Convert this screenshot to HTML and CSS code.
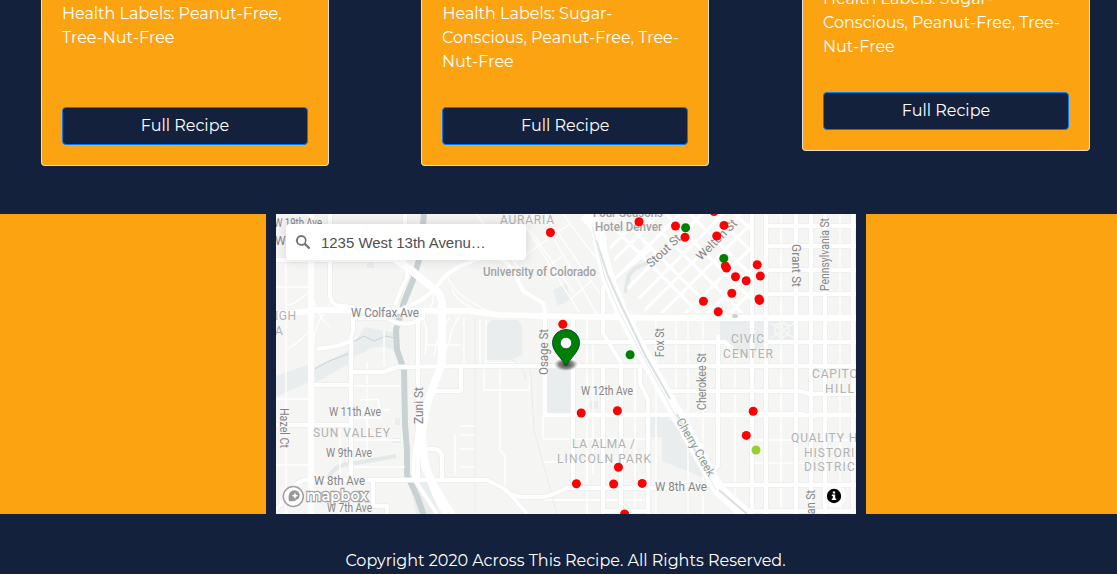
FILE: index.html
```html
<!DOCTYPE html>
<html lang="en">
<head>
<meta charset="utf-8">
<title>Across This Recipe</title>
<link rel="stylesheet" href="styles.css">
</head>
<body>
<main class="recipes">
  <article class="card">
    <p class="labels">Health Labels: Peanut-Free,<br>Tree-Nut-Free</p>
    <a class="btn">Full Recipe</a>
  </article>
  <article class="card middle">
    <p class="labels">Health Labels: Sugar-<br>Conscious, Peanut-Free, Tree-<br>Nut-Free</p>
    <a class="btn">Full Recipe</a>
  </article>
  <article class="card short">
    <p class="labels">Health Labels: Sugar-<br>Conscious, Peanut-Free, Tree-<br>Nut-Free</p>
    <a class="btn">Full Recipe</a>
  </article>
</main>
<section class="band">
  <div class="side left"></div>
  <div class="map">
    <svg class="tiles" viewBox="276 214 580 300" width="580" height="300">
      <defs>
        <clipPath id="downtown"><path d="M628 214H751V313H646L640 300L628 290L615 262L607 240Z"/></clipPath>
        <radialGradient id="shade"><stop offset="0" stop-color="#222" stop-opacity=".9"/><stop offset=".6" stop-color="#555" stop-opacity=".7"/><stop offset="1" stop-color="#888" stop-opacity="0"/></radialGradient>
        <g id="main">
          <path d="M311 214V514M276 315L317 310L470 311L500 315L545 316L660 318H856" stroke-width="6"/>
          <path d="M276 260H405M330 214V296Q331 305 340 306L353 307V330Q351 334 351 342V480M317 349L337 346L351 341M353 318H387Q398 326 412 323L423 318V311M405 214V266Q410 276 403 285L395 305M418 318V480M313 385H352M352 372H383L398 367L470 366H856M276 425H352M276 510L294 487Q298 481 306 480H487L503 488Q510 497 525 497H543Q551 496 567 488H660L700 485H856M373 481V506H387V514M461 366V391H437L428 394M418 391V430Q411 470 415 480L437 514M422 449H435Q442 450 442 458V480M504 488L512 496L527 514"/>
          <path d="M390 255L411 270L433 288Q442 294 442 305V363L430 395Q422 420 422 440L425 465L437 496L447 514" stroke-width="8"/>
          <path d="M428 472L440 492L453 514M403 308Q424 302 437 286Q448 270 465 264L490 255Q508 259 515 274L523 291L543 303Q545 308 545 320V415H856" stroke-width="4"/>
          <path d="M585 214L596 226Q600 236 601 252L608 278L622 313L644 355L700 456L719 490L748 516" stroke-width="13"/>
          <path d="M573 318V488M573 342H725L733 350M767 342H856M603 366V514M621 363V514M603 335V288L631 265L651 249M603 333L613 350L621 362M640 366V383L648 400V514M603 511H648M545 316V366M752 214V514M766 214V514M796 214V514M811 214V514M825 214V514M853 214V514M766 226H856M766 246H856M766 270H856M766 294H856M752 391H800L810 394H856M752 414H800L815 416M670 391H752M718 335V466L708 476M752 511H856"/>
          <g clip-path="url(#downtown)">
            <path d="M500 358L644 214M500 374L660 214M500 394L680 214M500 416L702 214M500 437L723 214M500 455L741 214M500 475L761 214M500 499L785 214M500 521L807 214M500 543L829 214M600 214L720 334M617 214L730 327M643 214L760 331M666 214L783 331M690 214L800 324M714 214L824 324M735 214L824 303" stroke-width="3.5"/>
          </g>
        </g>
      </defs>
      <rect x="276" y="214" width="580" height="300" fill="#f5f5f4"/>
      <g fill="#eaeded">
        <path d="M486 327L492 320H518L522 326V355L511 360H486ZM545 366H571V413H545ZM720 320H796V341H767L750 358L740 354L720 340ZM353 345L365 327L397 333L395 350Q375 343 365 352L353 356ZM313 368L350 350V363L315 383ZM276 376L313 363V380L276 397ZM648 415H669V437H648ZM662 419L672 421L709 478L714 482L662 461ZM409 480H427L440 514H416ZM553 290L566 284L571 299L558 306ZM590 401h8v8h-8ZM367 268h7v-8h-7ZM348 398h4v4h-4ZM395 418h5v7h-5ZM392 438h9v5h-9Z"/>
      </g>
      <path class="river thin" d="M315 369L327 362L353 352M353 342L364 336L374 341L386 336L395 338"/>
      <path class="river" d="M424 214L422 235L419 260L413 280L404 302L396 330L397 350L404 370L405 424L407 450V475L417 496L424 516"/>
      <path class="river pale" d="M625 293L629 275Q636 266 643 265L654 259M328 482Q330 469 343 465L396 456"/>
      <g class="minor">
        <path d="M286 260V514M276 287H311M276 399H311M276 465H311M352 386H400M352 410H390M352 440H402M352 467H405M384 330V366M367 362V450M340 430V514M425 345H460M486 320V363H520M500 363V450L505 456V490M484 363V390H529L531 366M460 426H475M455 435V475M460 435H475M460 449H475M460 467H475M464 318V363M480 320V366M587 318V514M635 318V510M656 318V514M676 318V390M688 318V514M703 318V514M735 360V514M543 439H648M543 462H648M543 500H648M543 415V438M593 343V475M752 440H856M752 463H856M781 214V514M840 214V514M553 237L606 330M530 230L574 293M514 263L570 224M525 225L579 312M545 214L604 300M563 214L608 274M592 280L570 300M537 275L562 256M500 248L535 214M476 214L519 268"/>
        <path d="M311 289Q297 305 286 305M311 330Q298 343 286 350M330 327Q315 315 312 290M333 300Q313 325 314 343M423 318Q440 300 429 288M405 310Q433 310 425 354M450 318Q438 330 434 357M460 315Q450 330 450 340L440 363M452 289Q455 302 480 311M447 273Q450 294 490 312M360 400L378 399L381 418H350M363 410L370 431L386 440"/>
      </g>
      <path d="M475 318V514M530 363L534 430L557 514M500 356Q523 359 526 380" fill="none" stroke="#e9eceb"/>
      <use href="#main" class="casing"/>
      <use href="#main" class="roads"/>
      <path class="river creek" d="M596 240L608 276L621 305L645 355L670 399M677 414L703 467M719 490L747 514"/>
      <path d="M592 225L605 278L618 309L642 355L698 456L716 490" fill="none" stroke="#e7ebeb"/>
      <g fill="none" stroke="#f5f5f4" stroke-width="2"><circle cx="782" cy="330" r="7"/><path d="M771 323L794 338M794 323L771 338M782 320V341"/></g>
      <ellipse cx="735" cy="316" rx="3" ry="2" fill="#c9d2d3"/>
      <g class="street">
        <text x="274" y="227" textLength="48" lengthAdjust="spacingAndGlyphs">W 19th Ave</text>
        <text x="275" y="245">W 1</text>
        <text x="351" y="317" textLength="68" lengthAdjust="spacingAndGlyphs">W Colfax Ave</text>
        <text x="329" y="416" textLength="52" lengthAdjust="spacingAndGlyphs">W 11th Ave</text>
        <text x="326" y="457" textLength="46" lengthAdjust="spacingAndGlyphs">W 9th Ave</text>
        <text x="314" y="485" textLength="51" lengthAdjust="spacingAndGlyphs">W 8th Ave</text>
        <text x="327" y="512" textLength="45" lengthAdjust="spacingAndGlyphs">W 7th Ave</text>
        <text x="581" y="395" textLength="52" lengthAdjust="spacingAndGlyphs">W 12th Ave</text>
        <text x="655" y="491" textLength="52" lengthAdjust="spacingAndGlyphs">W 8th Ave</text>
        <text transform="translate(423 424)rotate(-90)" textLength="37" lengthAdjust="spacingAndGlyphs">Zuni St</text>
        <text transform="translate(548 375)rotate(-90)" textLength="46" lengthAdjust="spacingAndGlyphs">Osage St</text>
        <text transform="translate(664 357)rotate(-90)" textLength="29" lengthAdjust="spacingAndGlyphs">Fox St</text>
        <text transform="translate(706 410)rotate(-90)" textLength="57" lengthAdjust="spacingAndGlyphs">Cherokee St</text>
        <text transform="translate(829 291)rotate(-90)" textLength="73" lengthAdjust="spacingAndGlyphs">Pennsylvania St</text>
        <text transform="translate(815 532)rotate(-90)" textLength="42" lengthAdjust="spacingAndGlyphs">Logan St</text>
        <text transform="translate(792 244)rotate(90)" textLength="43" lengthAdjust="spacingAndGlyphs">Grant St</text>
        <text transform="translate(280 408)rotate(90)" textLength="40" lengthAdjust="spacingAndGlyphs">Hazel Ct</text>
        <text transform="translate(651 268)rotate(-43)" textLength="42" lengthAdjust="spacingAndGlyphs">Stout St</text>
        <text transform="translate(701 261)rotate(-45)" textLength="52" lengthAdjust="spacingAndGlyphs">Welton St</text>
        <text transform="translate(676 421)rotate(60)" textLength="65" lengthAdjust="spacingAndGlyphs" class="water">Cherry Creek</text>
      </g>
      <g class="place">
        <text x="483" y="276" textLength="113" lengthAdjust="spacingAndGlyphs">University of Colorado</text>
        <text x="593" y="217" textLength="70" lengthAdjust="spacingAndGlyphs">Four Seasons</text>
        <text x="595" y="231" textLength="67" lengthAdjust="spacingAndGlyphs">Hotel Denver</text>
      </g>
      <g class="area">
        <text x="500" y="224" textLength="54">AURARIA</text>
        <text x="275" y="320" textLength="21">IGH</text><text x="275" y="335">A</text>
        <text x="313" y="437" textLength="77">SUN VALLEY</text>
        <text x="572" y="448" textLength="63">LA ALMA /</text><text x="557" y="463" textLength="94">LINCOLN PARK</text>
        <text x="731" y="343" textLength="33">CIVIC</text><text x="723" y="358" textLength="50">CENTER</text>
        <text x="812" y="378" textLength="53">CAPITOL</text><text x="825" y="393" textLength="29">HILL</text>
        <text x="791" y="442" textLength="85">QUALITY HILL</text><text x="804" y="457" textLength="59">HISTORIC</text><text x="804" y="471" textLength="59">DISTRICT</text>
      </g>
      <g fill="#f00">
        <circle cx="550.4" cy="232.5" r="4.5"/><circle cx="639" cy="221.8" r="4.5"/><circle cx="675.5" cy="226" r="4.5"/><circle cx="685" cy="237.3" r="4.5"/><circle cx="714" cy="211.5" r="4.5"/><circle cx="724" cy="225.4" r="4.5"/><circle cx="716.7" cy="236" r="4.5"/><circle cx="725.3" cy="266" r="4.5"/><circle cx="726.5" cy="268" r="4.5"/><circle cx="735.5" cy="276.7" r="4.5"/><circle cx="746.2" cy="280.8" r="4.5"/><circle cx="757.2" cy="264.8" r="4.5"/><circle cx="760.3" cy="276" r="4.5"/><circle cx="759" cy="299" r="4.5"/><circle cx="759.6" cy="300.4" r="4.5"/><circle cx="731.8" cy="293.2" r="4.5"/><circle cx="703.4" cy="301.2" r="4.5"/><circle cx="718.2" cy="311.8" r="4.5"/><circle cx="562.8" cy="324.3" r="4.5"/><circle cx="581.2" cy="413" r="4.5"/><circle cx="617.4" cy="410.7" r="4.5"/><circle cx="618.4" cy="467.3" r="4.5"/><circle cx="576.4" cy="483.8" r="4.5"/><circle cx="613.6" cy="484" r="4.5"/><circle cx="642.2" cy="483.4" r="4.5"/><circle cx="624.6" cy="514" r="4.5"/><circle cx="753.2" cy="411.3" r="4.5"/><circle cx="746.3" cy="435.4" r="4.5"/>
      </g>
      <g fill="#008000"><circle cx="685.6" cy="227.8" r="4.5"/><circle cx="723.8" cy="258.4" r="4.5"/><circle cx="630.1" cy="354.7" r="4.5"/></g>
      <circle cx="756" cy="450" r="4.5" fill="#9acd32"/>
      <ellipse cx="566" cy="364.5" rx="12" ry="6.5" fill="url(#shade)"/>
      <path d="M566 366C562 358 552.5 352 552.5 342.5A13.5 13 0 0 1 579.5 342.5C579.5 352 570 358 566 366Z" fill="#008000" stroke="#064b35"/>
      <circle cx="566" cy="343" r="5.7" fill="#fff" stroke="#064b35" stroke-width=".7"/>
      <g stroke="#a0a0a0">
        <circle cx="293.3" cy="496.5" r="10" fill="#fff" fill-opacity=".8" stroke-width="1.5"/>
        <path d="M289 501Q287.500 494 291 491.500Q295 489 298.500 492Q301 495 298.500 498.500Q295 502 289 501Z" fill="#999" stroke="none"/>
        <path d="M295 492.500L296 494.800L298.300 495.800L296 496.800L295 499.100L294 496.800L291.700 495.800L294 494.800Z" fill="#fff" stroke="none"/>
        <text class="brand" x="306" y="501" textLength="62" lengthAdjust="spacingAndGlyphs">mapbox</text>
      </g>
      <circle cx="834" cy="496" r="11.500" fill="#fff" fill-opacity=".65"/><circle cx="834" cy="496" r="7.200" fill="#000"/>
      <path d="M832.800 491.500h2.400v2h-2.400ZM831.800 494.500h3.400v4h1v1.500h-4.400v-1.500h1v-2.500h-1Z" fill="#fff"/>
    </svg>
    <div class="search">
      <svg viewBox="0 0 18 18" width="18" height="18"><path d="M7.400 2a5.400 5.400 0 1 0 2.900 9.900l4.500 4.400 1.600-1.600-4.500-4.500A5.400 5.400 0 0 0 7.400 2Zm0 1.900a3.500 3.500 0 1 1 0 7 3.500 3.500 0 0 1 0-7Z" fill="#757575"/></svg>
      <span>1235 West 13th Avenu…</span>
    </div>
  </div>
  <div class="side right"></div>
</section>
<footer><span>Copyright 2020 Across This Recipe. All Rights Reserved.</span></footer>
</body>
</html>
```
FILE: styles.css
```css
* { box-sizing: border-box; }
body { margin: 0; height: 574px; overflow: hidden; background: #14213d; color: #fff; font: 16px/24px Montserrat, Inter, sans-serif; }
.recipes { display: flex; align-items: flex-start; gap: 92px; height: 214px; padding-left: 41px; }
.card { display: flex; flex-direction: column; justify-content: flex-end; width: 288px; height: 166px; padding: 0 20px 20px; overflow: hidden; background: #fca311; border: 1px solid #dfdfdf; border-top: 0; border-radius: 0 0 4px 4px; flex: none; }
.middle .labels, .middle .btn { text-indent: .5px; }
.short { height: 151px; margin-left: 1px; }
.labels { flex: none; height: 72px; margin: 0 0 33px; white-space: nowrap; }
.btn { flex: none; height: 38px; border: 1px solid #007bff; border-radius: 4px; background: #14213d; text-align: center; line-height: 36px; }
.band { display: flex; gap: 10px; height: 300px; }
.side { background: #fca311; }
.left { width: 266px; }
.right { flex: 1; }
.map { position: relative; width: 580px; overflow: hidden; }
.tiles { display: block; }
.search { position: absolute; left: 10px; top: 10px; display: flex; align-items: center; gap: 9px; width: 240px; height: 36px; padding-left: 8px; border-radius: 4px; background: #fff; color: #505050; font: 15px "Liberation Sans", sans-serif; box-shadow: 0 0 10px 2px rgba(0,0,0,.1); }
.search span { width: 170px; white-space: nowrap; letter-spacing: -.03px; }
footer { display: flex; justify-content: center; padding: 35px 0 0 14px; white-space: nowrap; }
.casing { fill: none; stroke: #eceeee; stroke-width: 5.5px; stroke-linejoin: round; }
.roads { fill: none; stroke: #fff; stroke-width: 4px; stroke-linejoin: round; }
.minor { fill: none; stroke: #fff; stroke-width: 1.3px; }
.river { fill: none; stroke: #c9d2d3; stroke-width: 6px; stroke-linejoin: round; }
.thin { stroke-width: 1px; }
.pale { stroke: #e3e8e9; stroke-width: 4px; }
.creek { stroke-width: 2px; stroke: #d9e0df; }
text { font-family: Roboto, sans-serif; stroke: none; }
.street text { font-size: 12px; fill: #858585; paint-order: stroke; stroke: #f8f8f8; stroke-width: 1.5px; }
.street .water { fill: #8e9c9a; }
.place text { font-size: 12px; font-weight: 500; fill: #a1a1a1; paint-order: stroke; stroke: #f8f8f8; stroke-width: 1.5px; }
.area text { font-size: 12px; fill: #b2b2b2; }
.brand { font: 600 17px Montserrat, sans-serif; fill: #fff; stroke: #a0a0a0; stroke-width: 2.5px; paint-order: stroke; }
```
